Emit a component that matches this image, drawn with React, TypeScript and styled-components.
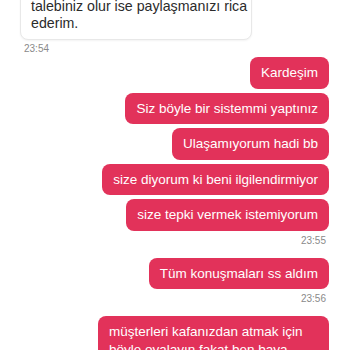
import styled, { createGlobalStyle } from 'styled-components'
import React from 'react'

const GlobalStyle = createGlobalStyle`
    html, body {
        margin: 0;
        padding: 0;
        background: #ffffff;
        font-family: "Liberation Sans", Arial, sans-serif;
    }
`

type Msg = { from: 'me' | 'them'; text: string } | { time: string; side: 'left' | 'right' }

const messages: Msg[] = [
    { from: 'them', text: 'Size yardımcı olabileceğim başka bir\ntalebiniz olur ise paylaşmanızı rica\nederim.' },
    { time: '23:54', side: 'left' },
    { from: 'me', text: 'Kardeşim' },
    { from: 'me', text: 'Siz böyle bir sistemmi yaptınız' },
    { from: 'me', text: 'Ulaşamıyorum hadi bb' },
    { from: 'me', text: 'size diyorum ki beni ilgilendirmiyor' },
    { from: 'me', text: 'size tepki vermek istemiyorum' },
    { time: '23:55', side: 'right' },
    { from: 'me', text: 'Tüm konuşmaları ss aldım' },
    { time: '23:56', side: 'right' },
    { from: 'me', text: 'müşterleri kafanızdan atmak için böyle oyalayın fakat ben baya sinirlendim' },
]

const App: React.FC = () => {
    return (
        <>
            <GlobalStyle />
            <Viewport>
                <Thread>
                    {messages.map((m, i) => {
                        if ('time' in m) {
                            return <Time key={i} side={m.side}>{m.time}</Time>
                        }
                        return m.from === 'me'
                            ? <Sent key={i}>{m.text}</Sent>
                            : <Received key={i}>{m.text}</Received>
                    })}
                </Thread>
            </Viewport>
        </>
    )
}

export default App

const Viewport = styled.div`
    width: 350px;
    height: 350px;
    overflow: hidden;
`

// the list is scrolled, so the first bubble starts above the window
const Thread = styled.div`
    display: flex;
    flex-direction: column;
    align-items: flex-start;
    gap: 4px;
    padding: 0 21px 0 20px;
    margin-top: -26px;
`

const Bubble = styled.div`
    box-sizing: border-box;
    font-size: 13.5px;
    line-height: 17.5px;
    border-radius: 8px;
    padding: 7px 11px;
`

const Received = styled(Bubble)`
    width: 232px;
    background: #ffffff;
    color: #2b2b2b;
    border: 1px solid #e8e8e8;
    box-shadow: 0 1px 2px rgba(0, 0, 0, 0.05);
    font-size: 14.2px;
    line-height: 17px;
    padding: 6px 10px 7px;
    white-space: pre;
`

const Sent = styled(Bubble)`
    align-self: flex-end;
    max-width: 231px;
    background: #e2325a;
    color: #ffffff;
`

const Time = styled.div<{ side: 'left' | 'right' }>`
    align-self: ${p => (p.side === 'right' ? 'flex-end' : 'flex-start')};
    font-size: 10px;
    line-height: 10px;
    color: #8a8a8a;
    margin: ${p => (p.side === 'right' ? '1px 3px 8px 0' : '0 0 -1px 4px')};
`
